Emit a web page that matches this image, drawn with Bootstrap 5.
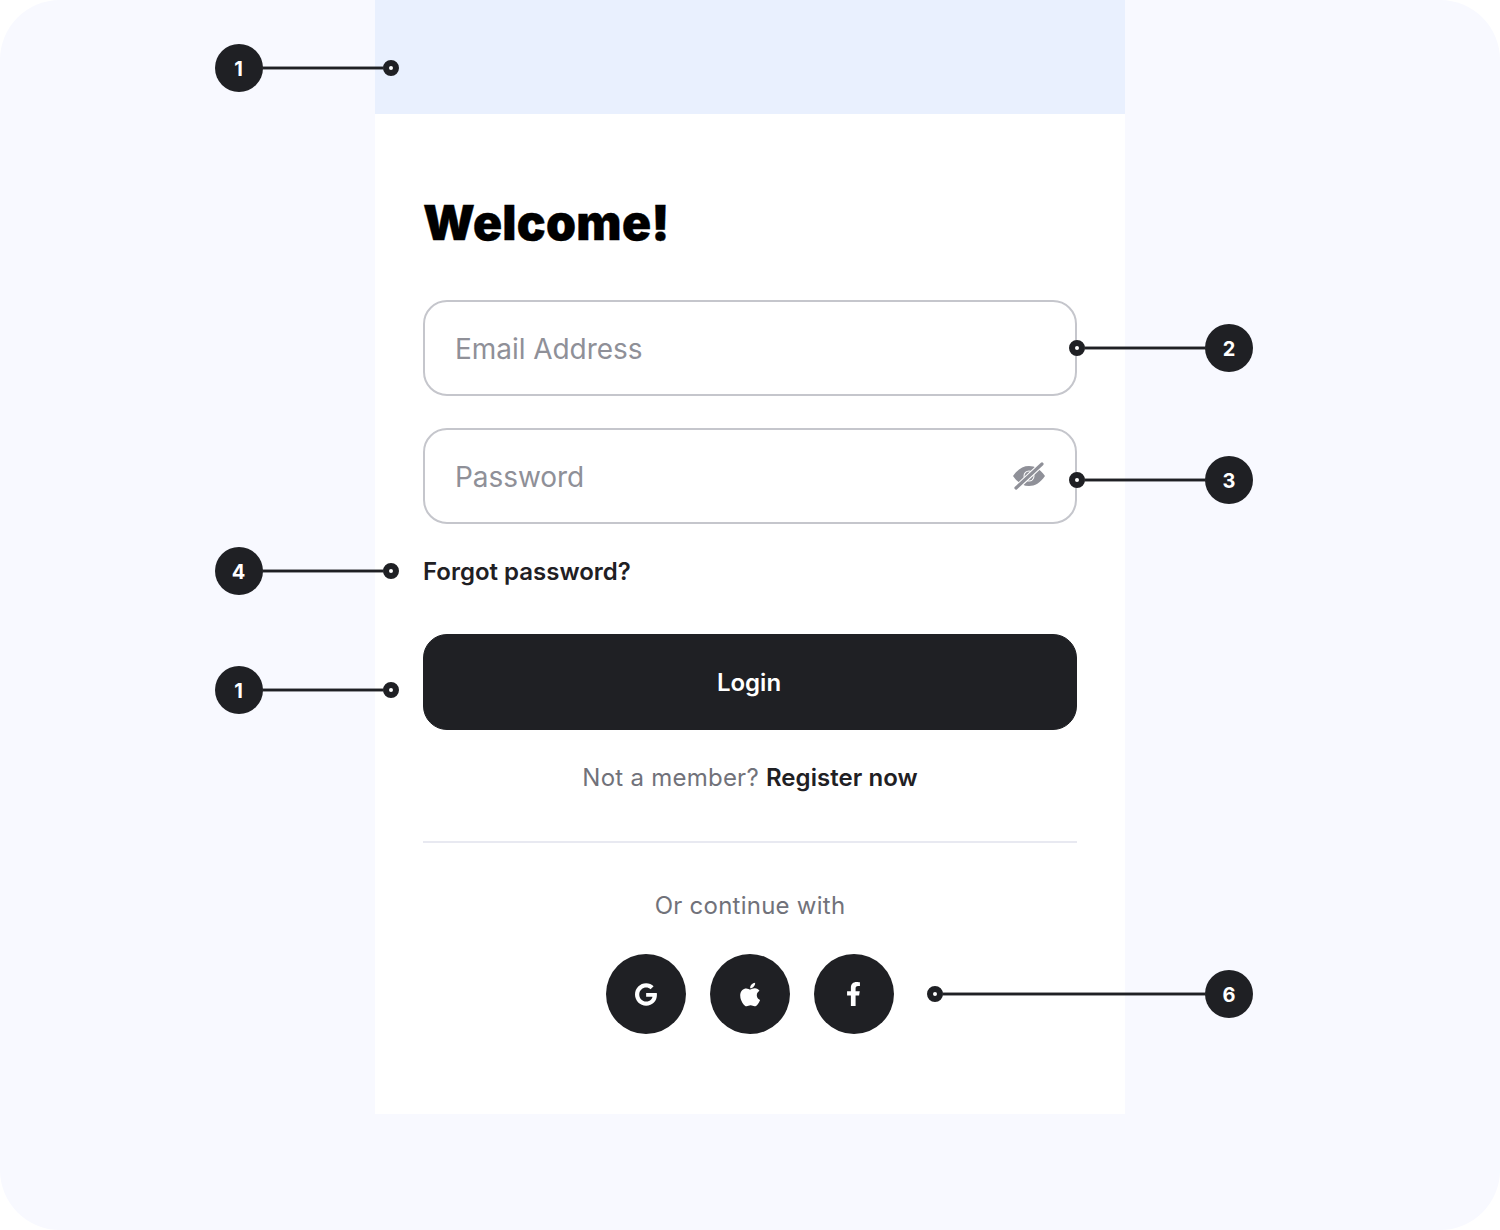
<!DOCTYPE html>
<html lang="en">
<head>
  <meta charset="UTF-8">
  <meta name="viewport" content="width=device-width, initial-scale=1">
  <title>Login</title>
  <link href="https://cdn.jsdelivr.net/npm/bootstrap@5.3.3/dist/css/bootstrap.min.css" rel="stylesheet">
  <style>
    body {
      background-color: #fff;
      font-family: Inter, "Liberation Sans", sans-serif;
      color: #1f2024;
    }
    .canvas {
      position: relative;
      width: 1500px;
      height: 1230px;
      background-color: #f8f9ff;
      border-radius: 60px;
      overflow: hidden;
    }
    .screen {
      width: 750px;
      height: 1114px;
      margin: 0 auto;
      background-color: #fff;
    }
    .status-band {
      height: 114px;
      background-color: #e9f0fe;
    }
    .login-form {
      padding: 82px 48px 0;
    }
    .welcome {
      font-family: Inter, "Liberation Sans", sans-serif;
      font-size: 48px;
      font-weight: 900;
      line-height: 54px;
      letter-spacing: .3px;
      -webkit-text-stroke: .4px #000;
      color: #000;
      margin: 0 0 50px 0;
    }
    .login-form .form-control {
      height: 96px;
      padding: 1px 30px 0;
      font-size: 28px;
      letter-spacing: -.05px;
      color: #1f2024;
      border: 2px solid #c5c6cc;
      border-radius: 24px;
      box-shadow: none;
    }
    .login-form .form-control::placeholder {
      color: #8f9098;
    }
    .field-wrap {
      position: relative;
      margin-top: 32px;
    }
    .eye-btn {
      position: absolute;
      top: 32px;
      right: 32px;
      width: 32px;
      height: 32px;
      display: block;
    }
    .forgot {
      display: block;
      margin-top: 32px;
      font-size: 24px;
      font-weight: 600;
      line-height: 32px;
      color: #1f2024;
      text-decoration: none;
    }
    .login-btn {
      display: block;
      width: 100%;
      height: 96px;
      margin-top: 46px;
      padding: 8px 14px 6px 12px;
      font-size: 24px;
      font-weight: 600;
      color: #fff;
      background-color: #1f2024;
      border-color: #1f2024;
      border-radius: 24px;
    }
    .member-line {
      margin-top: 32px;
      margin-bottom: 0;
      font-size: 24px;
      line-height: 32px;
      letter-spacing: .25px;
      color: #71727a;
      text-align: center;
    }
    .member-line a {
      font-weight: 600;
      letter-spacing: .05px;
      color: #1f2024;
      text-decoration: none;
    }
    .form-rule {
      height: 2px;
      margin: 47px 0;
      background-color: #e8e9f1;
      border: 0;
      opacity: 1;
    }
    .continue-line {
      font-size: 24px;
      line-height: 32px;
      letter-spacing: .25px;
      color: #71727a;
      text-align: center;
    }
    .social-btn {
      width: 80px;
      height: 80px;
      background-color: #1f2024;
    }
    .social-btn svg {
      fill: #fff;
    }
    .icon-google { height: 23px; }
    .icon-apple { height: 27px; }
    .icon-facebook { height: 24px; margin-right: 1px; }
    .callout {
      position: absolute;
      display: flex;
      align-items: center;
      height: 48px;
    }
    .callout-badge {
      flex: none;
      width: 48px;
      height: 48px;
      border-radius: 50%;
      background-color: #1f2024;
      color: #fff;
      font-size: 20px;
      font-weight: 700;
      line-height: 50px;
      text-align: center;
    }
    .callout-left .callout-badge {
      text-indent: -1px;
    }
    .callout-line {
      flex: 1;
      height: 2px;
      background-color: #1f2024;
      box-shadow: 0 0 0 1px rgba(31, 32, 36, .45);
    }
    .callout-dot {
      position: relative;
      flex: none;
      width: 16px;
      height: 16px;
      border: 6px solid #1f2024;
      border-radius: 50%;
      background-color: #fff;
    }
    .c-1a { left: 215px; top: 44px; width: 184px; }
    .c-2 { left: 1069px; top: 324px; width: 184px; }
    .c-3 { left: 1069px; top: 456px; width: 184px; }
    .c-4 { left: 215px; top: 547px; width: 184px; }
    .c-1b { left: 215px; top: 666px; width: 184px; }
    .c-6 { left: 927px; top: 970px; width: 326px; }
  </style>
</head>
<body>
  <div class="canvas">
    <div class="screen">
      <div class="status-band"></div>
      <form class="login-form">
        <h1 class="welcome">Welcome!</h1>
        <input type="text" class="form-control" placeholder="Email Address">
        <div class="field-wrap">
          <input type="password" class="form-control" placeholder="Password">
          <svg class="eye-btn" viewBox="0 0 32 32">
            <path fill="#8f9098" fill-rule="evenodd" d="M0 16C5 9 10 6 16 6s11 3 16 10c-5 7-10 10-16 10S5 23 0 16ZM16 10.5a5.5 5.5 0 1 0 0 11 5.5 5.5 0 0 0 0-11Z"/>
            <circle cx="16" cy="16" r="4.5" fill="#8f9098"/>
            <path stroke="#fff" stroke-width="5.5" d="M1 30 30 3"/>
            <path stroke="#8f9098" stroke-width="3.2" stroke-linecap="round" d="M3 28 29 4"/>
          </svg>
        </div>
        <a href="#" class="forgot">Forgot password?</a>
        <button type="button" class="btn login-btn">Login</button>
        <p class="member-line">Not a member? <a href="#">Register now</a></p>
        <hr class="form-rule">
        <div class="continue-line">Or continue with</div>
        <div class="d-flex justify-content-center gap-4 mt-4 pt-2">
          <a href="#" class="social-btn rounded-circle d-flex align-items-center justify-content-center" aria-label="Google">
            <svg class="icon-google" viewBox="0 0 488 512"><path d="M488 261.8C488 403.3 391.1 504 248 504 110.8 504 0 393.2 0 256S110.8 8 248 8c66.8 0 123 24.5 166.3 64.9l-67.5 64.9C258.5 52.6 94.3 116.6 94.3 256c0 86.5 69.1 156.6 153.7 156.6 98.2 0 135-70.4 140.8-106.9H248v-85.3h236.1c2.3 12.7 3.9 24.9 3.9 41.4z"/></svg>
          </a>
          <a href="#" class="social-btn rounded-circle d-flex align-items-center justify-content-center" aria-label="Apple">
            <svg class="icon-apple" viewBox="0 0 384 512"><path d="M318.7 268.7c-.2-36.7 16.4-64.4 50-84.8-18.8-26.9-47.2-41.7-84.7-44.6-35.5-2.8-74.3 20.7-88.5 20.7-15 0-49.4-19.7-76.4-19.7C63.3 141.2 4 184.8 4 273.5q0 39.3 14.4 81.2c12.8 36.7 59 126.7 107.2 125.2 25.2-.6 43-17.9 75.8-17.9 31.8 0 48.3 17.9 76.4 17.9 48.6-.7 90.4-82.5 102.6-119.3-65.2-30.7-61.7-90-61.7-91.9zm-56.6-164.2c27.3-32.4 24.8-61.9 24-72.5-24.1 1.4-52 16.4-67.9 34.9-17.5 19.8-27.8 44.3-25.6 71.9 26.1 2 49.9-11.4 69.5-34.3z"/></svg>
          </a>
          <a href="#" class="social-btn rounded-circle d-flex align-items-center justify-content-center" aria-label="Facebook">
            <svg class="icon-facebook" viewBox="0 0 320 512"><path d="M279.14 288l14.22-92.66h-88.91v-60.13c0-25.35 12.42-50.06 52.24-50.06h40.42V6.26S260.43 0 225.36 0c-73.22 0-121.08 44.38-121.08 124.72v70.62H22.89V288h81.39v224h100.17V288z"/></svg>
          </a>
        </div>
      </form>
    </div>

    <div class="callout callout-left c-1a"><span class="callout-badge">1</span><span class="callout-line"></span><span class="callout-dot"></span></div>
    <div class="callout c-2"><span class="callout-dot"></span><span class="callout-line"></span><span class="callout-badge">2</span></div>
    <div class="callout c-3"><span class="callout-dot"></span><span class="callout-line"></span><span class="callout-badge">3</span></div>
    <div class="callout callout-left c-4"><span class="callout-badge">4</span><span class="callout-line"></span><span class="callout-dot"></span></div>
    <div class="callout callout-left c-1b"><span class="callout-badge">1</span><span class="callout-line"></span><span class="callout-dot"></span></div>
    <div class="callout c-6"><span class="callout-dot"></span><span class="callout-line"></span><span class="callout-badge">6</span></div>
  </div>
  <script src="https://cdn.jsdelivr.net/npm/bootstrap@5.3.3/dist/js/bootstrap.bundle.min.js"></script>
</body>
</html>
